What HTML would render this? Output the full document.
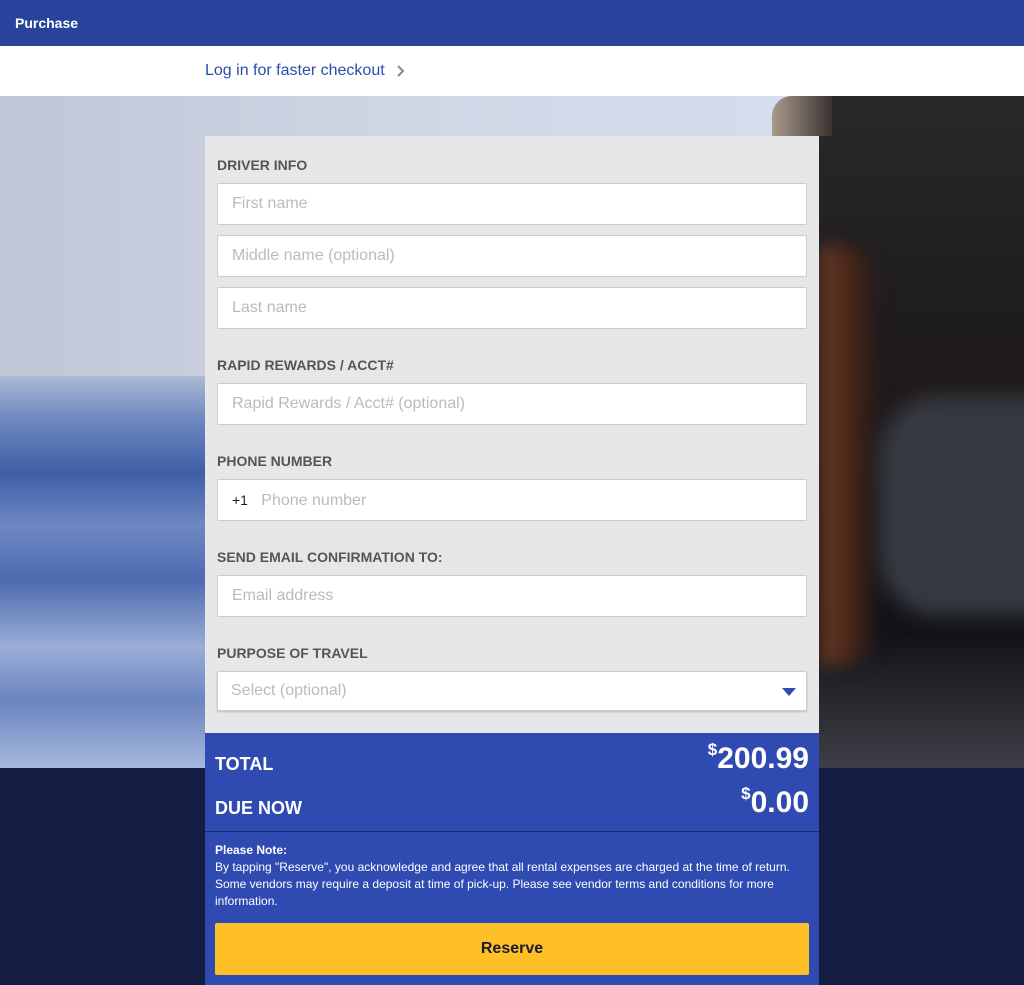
<!DOCTYPE html>
<html><head><meta charset="utf-8"><style>
*{box-sizing:border-box;margin:0;padding:0}
body{width:1024px;height:985px;overflow:hidden;font-family:"Liberation Sans",sans-serif;background:#141c44;position:relative}
.hdr{position:absolute;left:0;top:0;width:1024px;height:46px;background:#28439b;color:#fff;font-weight:bold;font-size:14px;line-height:46px;padding-left:15px}
.login{position:absolute;left:0;top:46px;width:1024px;height:50px;background:#fff}
.login span{position:absolute;left:205px;top:16px;font-size:16px;color:#2f4bad}
.bgl{position:absolute;left:0;top:96px;width:1024px;height:672px;background:linear-gradient(180deg,#c3c9d8 0%,#ccd3e2 41%,#a9b7d6 42%,#6f89c0 48%,#3f5ea6 56%,#6e88c2 64%,#4e6ab0 72%,#9aaed6 82%,#6a84bf 90%,#a7b8dd 100%)}
.bgt{position:absolute;left:0;top:96px;width:1024px;height:280px;background:linear-gradient(90deg,#c0c6d6 0%,#d0d6e4 40%,#d4dcec 70%,#dbe5f5 100%)}
.bgr{position:absolute;left:819px;top:96px;width:205px;height:672px;overflow:hidden;background:linear-gradient(180deg,#2a2828 0%,#1f1d1f 30%,#201a1a 45%,#1a1618 60%,#121218 80%,#3e3e46 100%)}
.hair{position:absolute;left:0;top:150px;width:60px;height:420px;background:linear-gradient(90deg,#6a3a22,#3a2018 70%,rgba(30,20,20,0));border-radius:0 40px 40px 0;filter:blur(8px)}
.shoulder{position:absolute;left:60px;top:300px;width:160px;height:220px;background:#363a42;border-radius:60px 0 0 60px;filter:blur(10px)}
.brim{position:absolute;left:772px;top:96px;width:60px;height:40px;background:linear-gradient(90deg,#a99a8c,#3a3330);border-radius:20px 0 0 0}
.card{position:absolute;left:205px;top:136px;width:614px;height:597px;background:#e6e7e9;padding:0 12px}
.lbl{position:absolute;left:12px;font-size:14px;font-weight:bold;color:#555}
.in{position:absolute;left:12px;width:590px;height:42px;background:#fff;border:1px solid #cdcdcd;border-radius:2px;font-size:16px;color:#bbb;line-height:40px;padding-left:14px}
.tot{position:absolute;left:205px;top:733px;width:614px;height:252px;background:#2f4bb1;color:#fff}
.tot .l{position:absolute;left:10px;font-size:18px;font-weight:bold}
.tot .r{position:absolute;right:10px;font-size:30px;font-weight:bold}
.tot .r sup{font-size:17px;vertical-align:top;position:relative;top:-2px}
.line{position:absolute;left:0;top:98px;width:614px;height:1px;background:#1b2a6a}
.note{position:absolute;left:10px;top:109px;width:600px;font-size:12px;line-height:17px}
.btn{position:absolute;left:10px;top:190px;width:594px;height:52px;background:#ffbf27;border-radius:2px;color:#1a1a2e;font-size:16px;font-weight:bold;text-align:center;line-height:52px}
</style></head><body>
<div class="hdr">Purchase</div>
<div class="login"><span>Log in for faster checkout</span></div>
<svg style="position:absolute;left:396px;top:64px" width="10" height="14"><path d="M2 2l5 5-5 5" stroke="#888" stroke-width="2" fill="none"/></svg>
<div class="bgl"></div><div class="bgt"></div><div class="bgr"><div class="hair"></div><div class="shoulder"></div></div><div class="brim"></div>
<div class="card">
<div class="lbl" style="top:21px">DRIVER INFO</div>
<div class="in" style="top:47px">First name</div>
<div class="in" style="top:99px">Middle name (optional)</div>
<div class="in" style="top:151px">Last name</div>
<div class="lbl" style="top:221px">RAPID REWARDS / ACCT#</div>
<div class="in" style="top:247px">Rapid Rewards / Acct# (optional)</div>
<div class="lbl" style="top:317px">PHONE NUMBER</div>
<div class="in" style="top:343px"><span style="color:#1a1a3a;font-size:14px">+1</span>&nbsp;&nbsp;&nbsp;Phone number</div>
<div class="lbl" style="top:413px">SEND EMAIL CONFIRMATION TO:</div>
<div class="in" style="top:439px">Email address</div>
<div class="lbl" style="top:509px">PURPOSE OF TRAVEL</div>
<div class="in" style="top:535px;height:40px;line-height:38px;padding-left:13px;box-shadow:0 1px 2px rgba(0,0,0,.2)">Select (optional)<svg style="position:absolute;right:10px;top:16px" width="14" height="8"><path d="M0 0h14L7 8z" fill="#2f4bad"/></svg></div>
</div>
<div class="tot">
<div class="l" style="top:21px">TOTAL</div>
<div class="r" style="top:9px"><sup>$</sup>200.99</div>
<div class="l" style="top:65px">DUE NOW</div>
<div class="r" style="top:53px"><sup>$</sup>0.00</div>
<div class="line"></div>
<div class="note"><b>Please Note:</b><br>By tapping "Reserve", you acknowledge and agree that all rental expenses are charged at the time of return. Some vendors may require a deposit at time of pick-up. Please see vendor terms and conditions for more information.</div>
<div class="btn">Reserve</div>
</div>
</body></html>
